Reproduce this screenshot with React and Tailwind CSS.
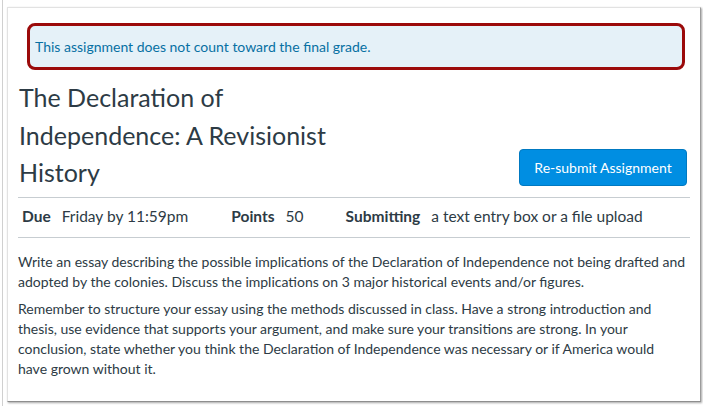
import React from 'react';

export default function App() {
  const font = { fontFamily: 'Lato, "Noto Sans", sans-serif' };

  return (
    <div className="w-[703px] h-[406px] bg-white overflow-hidden text-[#2d3b45]" style={font}>
      <div className="ml-[2px] h-full border-l border-[#d0d0d0] pt-[7px] pl-[4px]">
        <div className="w-[694px] h-[395px] border border-t-[#e2e2e2] border-l-[#e2e2e2] border-r-[#9c9c9c] border-b-[#8e8e8e] shadow-[1px_1px_2px_rgba(0,0,0,0.35)] overflow-hidden">
          {/* Grade notice */}
          <div className="ml-[19px] mt-[15px] w-[658px] h-[47px] rounded-[8px] border-[3px] border-[#9b0a0a] bg-[#e5f1f8] flex items-center pl-[5px]">
            <p className="text-[14px] text-[#0770a3]">This assignment does not count toward the final grade.</p>
          </div>

          <div className="mx-[10px]">
            {/* Title + button */}
            <div className="flex items-end justify-between border-b border-[#c7cdd1] mt-[9px]">
              <h1 className="w-[330px] text-[25px] leading-[37.5px] font-normal pb-[5px] pl-[1px]">
                The Declaration of Independence: A Revisionist History
              </h1>
              <button className="mb-[11px] mr-[3px] w-[168px] h-[37px] rounded-[4px] bg-[#008ee2] border border-[#0079c1] text-white text-[14px]">
                Re-submit Assignment
              </button>
            </div>

            {/* Details */}
            <div className="h-[40px] flex items-center border-b border-[#c7cdd1] pl-[4px] text-[15.5px]">
              <span className="font-bold mr-[11px]">Due</span>
              <span className="mr-[43px]">Friday by 11:59pm</span>
              <span className="font-bold mr-[11px]">Points</span>
              <span className="mr-[42px]">50</span>
              <span className="font-bold mr-[11px]">Submitting</span>
              <span>a text entry box or a file upload</span>
            </div>

            {/* Description */}
            <div className="mt-[14px] text-[14px] leading-[20px]">
              <p className="mb-[7px]">
                Write an essay describing the possible implications of the Declaration of Independence not being drafted and adopted by the colonies. Discuss the implications on 3 major historical events and/or figures.
              </p>
              <p className="w-[640px]">
                Remember to structure your essay using the methods discussed in class. Have a strong introduction and thesis, use evidence that supports your argument, and make sure your transitions are strong. In your conclusion, state whether you think the Declaration of Independence was necessary or if America would have grown without it.
              </p>
            </div>
          </div>
        </div>
      </div>
    </div>
  );
}
